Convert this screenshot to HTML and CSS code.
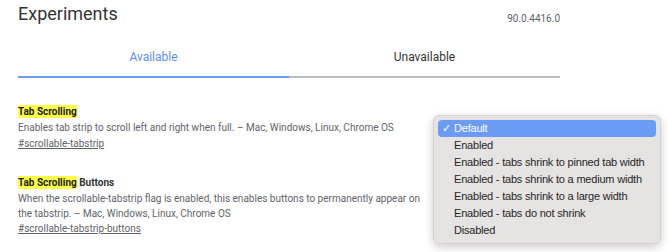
FILE: index.html
```html
<!DOCTYPE html>
<html lang="en">
<head>
    <meta charset="UTF-8">
    <title>Experiments</title>
    <link rel="stylesheet" href="styles.css">
</head>
<body>
    <div class="page">
        <header class="header">
            <h1>Experiments</h1>
            <span class="version">90.0.4416.0</span>
        </header>

        <nav class="tabs">
            <div class="tab active">Available</div>
            <div class="tab">Unavailable</div>
        </nav>

        <section class="experiment">
            <h3><mark>Tab Scrolling</mark></h3>
            <p class="desc">Enables tab strip to scroll left and right when full. – Mac, Windows, Linux, Chrome OS</p>
            <a class="permalink" href="#scrollable-tabstrip">#scrollable-tabstrip</a>
        </section>

        <section class="experiment">
            <h3><mark>Tab Scrolling</mark> Buttons</h3>
            <p class="desc">When the scrollable-tabstrip flag is enabled, this enables buttons to permanently appear on the tabstrip. – Mac, Windows, Linux, Chrome OS</p>
            <a class="permalink" href="#scrollable-tabstrip-buttons">#scrollable-tabstrip-buttons</a>
        </section>
    </div>

    <!-- open select popup -->
    <ul class="menu">
        <li class="selected"><span class="check">✓</span>Default</li>
        <li>Enabled</li>
        <li>Enabled - tabs shrink to pinned tab width</li>
        <li>Enabled - tabs shrink to a medium width</li>
        <li>Enabled - tabs shrink to a large width</li>
        <li>Enabled - tabs do not shrink</li>
        <li>Disabled</li>
    </ul>
</body>
</html>
```

FILE: styles.css
```css
body {
    margin: 0;
    font-family: Roboto, "Liberation Sans", sans-serif;
    color: #333;
    background: #fff;
}
.page {
    width: 542px;
    padding-left: 18px;
}
.header {
    display: flex;
    justify-content: space-between;
    align-items: flex-start;
    height: 39px;
}
.header h1 {
    margin: 0;
    padding-top: 2px;
    font-size: 18px;
    font-weight: 400;
    line-height: 24px;
    color: #333;
}
.version {
    padding-top: 12px;
    font-size: 10px;
    line-height: 14px;
    color: #5f6368;
}
.tabs {
    display: flex;
}
.tab {
    flex: 1;
    text-align: center;
    font-size: 12px;
    line-height: 16px;
    padding: 10px 0 11px;
    border-bottom: 2px solid #bdbdbd;
    color: #333;
}
.tab.active {
    color: #5a8ef0;
    border-bottom-color: #6d9cf3;
}
.experiment {
    width: 412px;
}
.experiment:first-of-type {
    margin-top: 26px;
}
.experiment + .experiment {
    margin-top: 22px;
}
.experiment h3 {
    margin: 0;
    font-size: 10px;
    font-weight: 700;
    line-height: 16px;
    color: #333;
}
.experiment + .experiment h3 {
    line-height: 17px;
}
mark {
    background: #ffff46;
    color: #202124;
    padding: 1px 0;
}
.desc {
    margin: 0;
    font-size: 10px;
    line-height: 16px;
    color: #5f6368;
}
.experiment + .experiment .desc {
    line-height: 15px;
}
.permalink {
    display: block;
    font-size: 10px;
    line-height: 16px;
    color: #5f6368;
    text-decoration: underline;
}
.menu {
    position: absolute;
    left: 433px;
    top: 115px;
    width: 218px;
    margin: 0;
    padding: 4px;
    list-style: none;
    background: #e6e4e2;
    border: 1px solid #d4d2d0;
    border-radius: 6px;
    box-shadow: 0 3px 10px rgba(0, 0, 0, 0.2);
    font-family: "Liberation Sans", sans-serif;
    font-size: 11px;
    letter-spacing: -0.2px;
    color: #262626;
}
.menu li {
    height: 17px;
    line-height: 17px;
    padding-left: 16px;
    border-radius: 4px;
    white-space: nowrap;
}
.menu li.selected {
    background: #6b9cf4;
    color: #fff;
    padding-left: 4px;
}
.check {
    display: inline-block;
    width: 12px;
}
```
